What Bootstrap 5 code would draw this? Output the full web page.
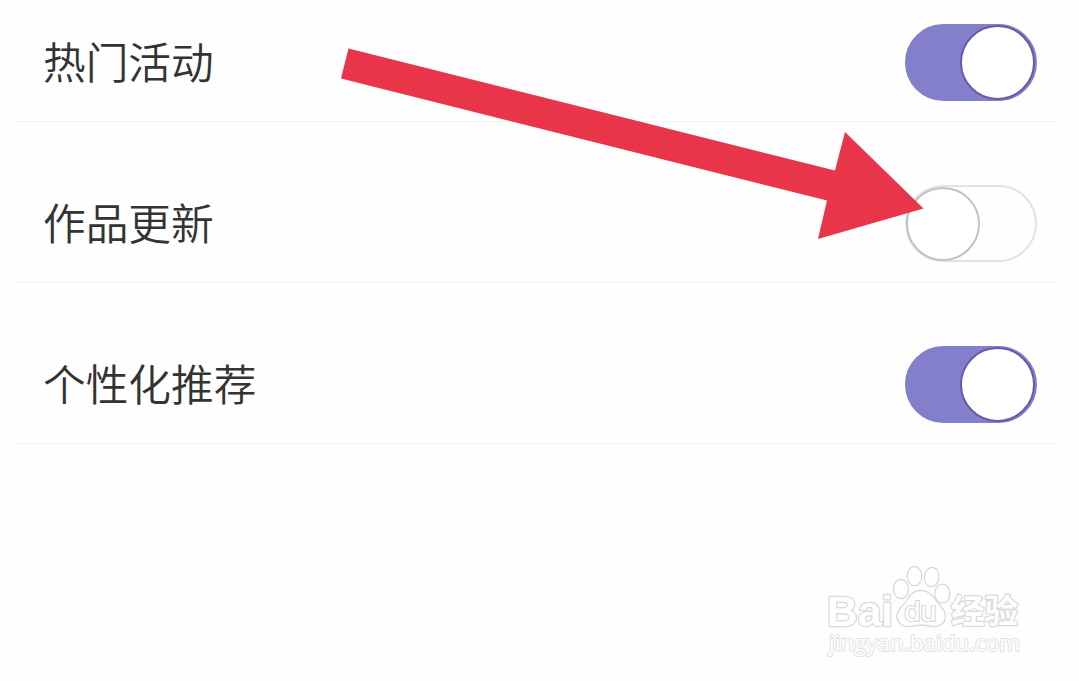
<!DOCTYPE html>
<html lang="zh-CN">
<head>
    <meta charset="UTF-8" />
    <meta name="viewport" content="width=device-width, initial-scale=1" />
    <title>消息设置</title>
    <link href="https://cdn.jsdelivr.net/npm/bootstrap@5.3.0/dist/css/bootstrap.min.css" rel="stylesheet" />
    <style>
        body {
            background: #fefefe;
            font-family: "Noto Sans CJK SC", sans-serif;
            height: 681px;
        }
        .settings {
            padding: 0 23px 0 16px;
        }
        .setting-row {
            height: 161px;
            padding: 0 19px 20px 27px;
            border-bottom: 1px solid #f3f3f3;
        }
        .setting-row:first-child {
            height: 122px;
        }
        .setting-name {
            color: #333;
            font-size: 42.7px;
            font-weight: 350;
            line-height: 77px;
            padding-bottom: 2px;
        }
        .toggle {
            width: 132px;
            height: 77px;
            border: 2px solid #e2e2e2;
            border-radius: 39px;
            background: #fefefe;
        }
        .toggle::before {
            content: "";
            width: 74px;
            height: 74px;
            margin-left: -1px;
            border: 2px solid #c2c2c2;
            border-radius: 50%;
            background: #fff;
        }
        .toggle.on {
            justify-content: flex-end;
            border-color: #837fca;
            background: #837fca;
        }
        .toggle.on::before {
            width: 75px;
            height: 75px;
            margin: -1px 0 0;
            border-color: #655baa;
        }
        .overlay-art {
            pointer-events: none;
        }
    </style>
</head>
<body class="position-relative overflow-hidden">
    <div class="settings">
        <div class="setting-row d-flex justify-content-between align-items-end">
            <span class="setting-name">热门活动</span>
            <span class="toggle on d-flex" role="switch" aria-checked="true"></span>
        </div>
        <div class="setting-row d-flex justify-content-between align-items-end">
            <span class="setting-name">作品更新</span>
            <span class="toggle d-flex" role="switch" aria-checked="false"></span>
        </div>
        <div class="setting-row d-flex justify-content-between align-items-end">
            <span class="setting-name">个性化推荐</span>
            <span class="toggle on d-flex" role="switch" aria-checked="true"></span>
        </div>
    </div>

    <!-- Arrow and watermark lie over the list -->
    <svg class="overlay-art position-absolute top-0 start-0" width="1079" height="681" viewBox="0 0 1079 681">
        <path fill="#e93549" d="M348.5 48.5 835 170.5 845 132 923.5 208.5 818 239 827 200.5 341 78.5z" />
        <g fill="#fff" stroke="#d9d9d9" stroke-width="1.3" stroke-linejoin="round">
            <g font-family="Liberation Sans, sans-serif" font-weight="bold" paint-order="stroke" stroke-width="2.4">
                <text x="827" y="625.500" font-size="42" textLength="66" lengthAdjust="spacingAndGlyphs">Bai</text>
                <text x="951" y="623" font-family="Noto Sans CJK SC, sans-serif" font-size="33.500" textLength="67" lengthAdjust="spacingAndGlyphs">经验</text>
                <text x="829" y="651" font-family="Open Sans, sans-serif" font-weight="500" font-size="21.500" stroke="#e2e2e2" stroke-width="2" textLength="191" lengthAdjust="spacingAndGlyphs">jingyan.baidu.com</text>
            </g>
            <ellipse cx="901" cy="589" rx="7.5" ry="9.6" />
            <ellipse cx="914.5" cy="576" rx="7.3" ry="9.7" />
            <ellipse cx="931.7" cy="577" rx="7.3" ry="9.6" transform="rotate(8 931.7 577)" />
            <ellipse cx="942.3" cy="593.7" rx="7.6" ry="9.5" />
            <path d="M921 590.5C915 590.5 910 594 907 600C904 605 897 609 897 616C897 623 903 627.500 910 626.500C917 625 926 625 932 626.500C940 627.500 945.500 623 945.500 616C945.500 609 939 605 935.500 600C932 594 927 590.500 921 590.500z" />
            <text x="904.500" y="620.500" font-family="Liberation Sans, sans-serif" font-size="27" stroke-width="2.200" paint-order="stroke" textLength="32" lengthAdjust="spacingAndGlyphs">du</text>
        </g>
    </svg>

    <script src="https://cdn.jsdelivr.net/npm/bootstrap@5.3.0/dist/js/bootstrap.bundle.min.js"></script>
</body>
</html>
